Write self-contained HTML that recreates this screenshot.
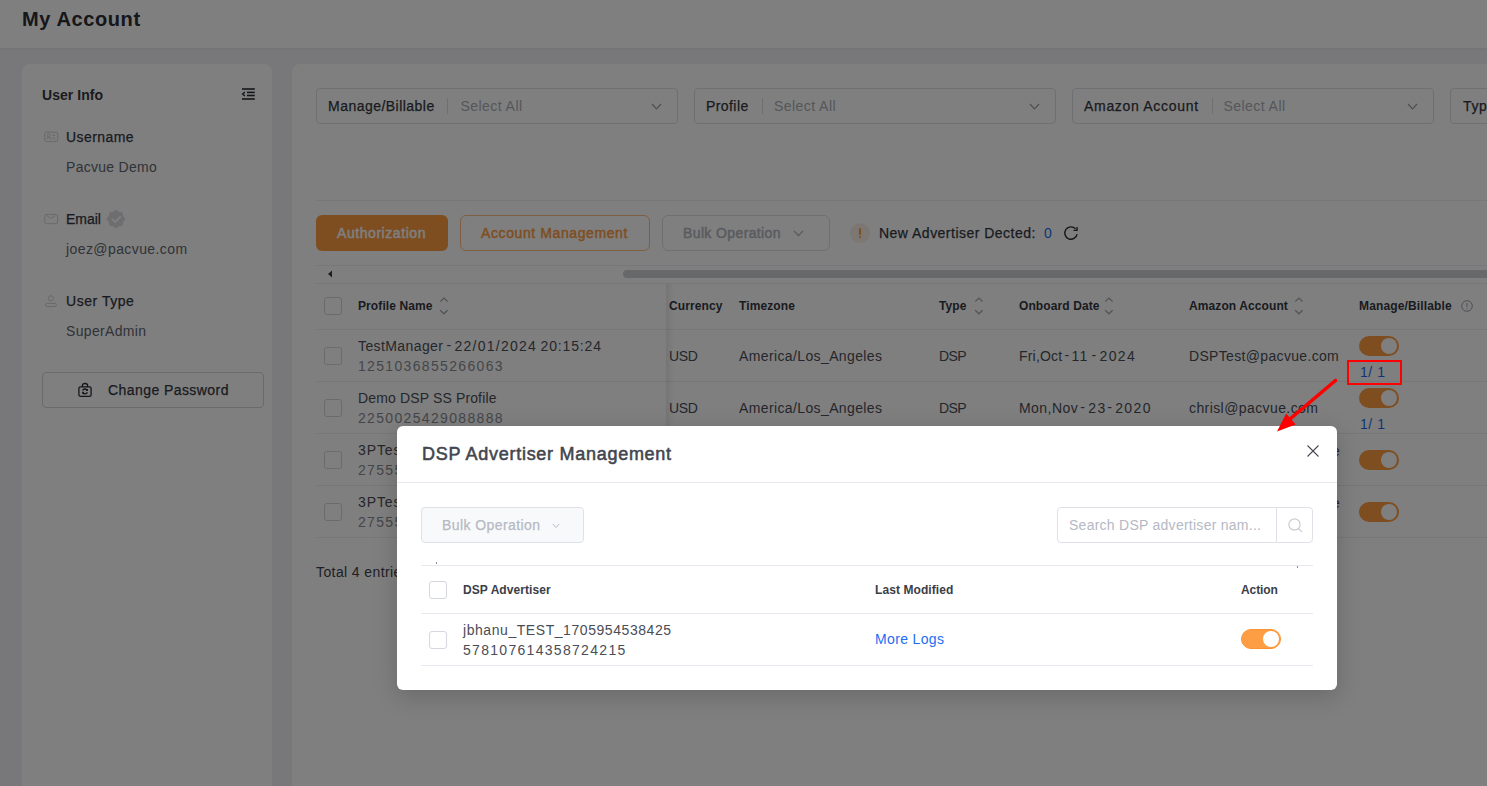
<!DOCTYPE html>
<html><head><meta charset="utf-8"><style>
html,body{margin:0;padding:0;}
body{width:1487px;height:786px;overflow:hidden;position:relative;background:#f1f1f4;font-family:"Liberation Sans",sans-serif;}
.a{position:absolute;}
.t{position:absolute;white-space:nowrap;}
</style></head><body>
<div class="a" style="left:0px;top:0px;width:1487px;height:48px;background:#fff;box-shadow:0 1px 3px rgba(0,0,0,0.06)"></div>
<div class="t" style="left:22px;top:5.07px;font-size:20px;line-height:28px;color:#2b2e37;font-weight:bold;letter-spacing:0.61px;">My Account</div>
<div class="a" style="left:22px;top:64px;width:250px;height:800px;background:#fff;border-radius:8px"></div>
<div class="t" style="left:42px;top:85.15px;font-size:14px;line-height:20px;color:#343741;font-weight:bold;letter-spacing:0.05px;">User Info</div>
<svg class="a" style="left:240px;top:87px" width="16" height="14" viewBox="0 0 16 14"><g stroke="#2a2c33" stroke-width="1.6" fill="none"><line x1="2" y1="2" x2="14.8" y2="2"/><line x1="7" y1="5.4" x2="14.8" y2="5.4"/><line x1="7" y1="8.5" x2="14.8" y2="8.5"/><line x1="2" y1="12" x2="14.8" y2="12"/><polyline points="4.9,4.9 2.6,7 4.9,9.1" stroke-width="1.4"/></g></svg>
<svg class="a" style="left:44px;top:131px" width="15" height="12" viewBox="0 0 15 12"><g stroke="#d2d3d8" stroke-width="1" fill="none"><rect x="0.7" y="1.2" width="13" height="9.4" rx="1.5"/><circle cx="4.6" cy="4.6" r="1.5"/><path d="M2.3 8.6 Q2.8 6.4 4.6 6.4 Q6.4 6.4 6.9 8.6"/><line x1="8.3" y1="4.4" x2="11.3" y2="4.4"/><line x1="8.3" y1="7.2" x2="11.3" y2="7.2"/></g></svg>
<div class="t" style="left:66px;top:127.15px;font-size:14px;line-height:20px;color:#343741;font-weight:normal;letter-spacing:0.44px;-webkit-text-stroke:0.25px currentColor">Username</div>
<div class="t" style="left:66px;top:157.15px;font-size:14px;line-height:20px;color:#62666f;font-weight:normal;letter-spacing:0.29px;">Pacvue Demo</div>
<svg class="a" style="left:44px;top:213px" width="15" height="12" viewBox="0 0 15 12"><g stroke="#d2d3d8" stroke-width="1" fill="none"><rect x="0.8" y="1.4" width="12.8" height="9.3" rx="1.6"/><polyline points="2.7,2.6 6.9,5.5 11.1,2.6"/></g></svg>
<div class="t" style="left:66px;top:208.95px;font-size:14px;line-height:20px;color:#343741;font-weight:normal;letter-spacing:-0.05px;-webkit-text-stroke:0.25px currentColor">Email</div>
<svg class="a" style="left:106px;top:209px" width="20" height="20" viewBox="0 0 20 20"><g fill="#dcdde1"><rect x="2.9" y="2.9" width="14.2" height="14.2" rx="2.2"/><rect x="2.9" y="2.9" width="14.2" height="14.2" rx="2.2" transform="rotate(45 10 10)"/></g><polyline points="6.3,10.4 9.2,13.2 14.3,7.9" stroke="#fff" stroke-width="1.8" fill="none" stroke-linecap="round" stroke-linejoin="round"/></svg>
<div class="t" style="left:66px;top:239.15px;font-size:14px;line-height:20px;color:#62666f;font-weight:normal;letter-spacing:0.41px;">joez@pacvue.com</div>
<svg class="a" style="left:44px;top:294px" width="15" height="14" viewBox="0 0 15 14"><g stroke="#d2d3d8" stroke-width="1" fill="none"><circle cx="6.9" cy="4.3" r="2.6"/><rect x="1.6" y="9.4" width="10.8" height="3.1" rx="1.55"/></g></svg>
<div class="t" style="left:66px;top:290.95px;font-size:14px;line-height:20px;color:#343741;font-weight:normal;letter-spacing:0.54px;-webkit-text-stroke:0.25px currentColor">User Type</div>
<div class="t" style="left:66px;top:321.15px;font-size:14px;line-height:20px;color:#62666f;font-weight:normal;letter-spacing:0.33px;">SuperAdmin</div>
<div class="a" style="left:42px;top:372px;width:222px;height:36px;box-sizing:border-box;border:1px solid #d4d7de;border-radius:4px;background:#fff"></div>
<svg class="a" style="left:77px;top:382px" width="16" height="16" viewBox="0 0 16 16"><g stroke="#2a2c33" stroke-width="1.3" fill="none"><rect x="1.9" y="4.9" width="12.2" height="9.4" rx="1.6"/><path d="M5.4 4.9 V3.6 Q5.4 1.5 8 1.5 Q10.6 1.5 10.6 3.6 V4.9"/><path d="M5.6 8.6 A2.6 2.6 0 0 1 10.2 8.2"/><path d="M10.4 10.2 A2.6 2.6 0 0 1 5.8 10.6"/><polyline points="10.4,7 10.3,8.4 8.9,8.4" stroke-width="1.1"/><polyline points="5.6,11.8 5.7,10.4 7.1,10.4" stroke-width="1.1"/></g></svg>
<div class="t" style="left:108px;top:380.15px;font-size:14px;line-height:20px;color:#343741;font-weight:normal;letter-spacing:0.43px;-webkit-text-stroke:0.25px currentColor">Change Password</div>
<div class="a" style="left:292px;top:64px;width:1300px;height:800px;background:#fff;border-radius:8px"></div>
<div class="a" style="left:316px;top:88px;width:362px;height:36px;box-sizing:border-box;border:1px solid #dcdfe6;border-radius:4px;background:#fff"></div>
<div class="t" style="left:328px;top:96.15px;font-size:14px;line-height:20px;color:#343741;font-weight:normal;letter-spacing:0.47px;-webkit-text-stroke:0.25px currentColor">Manage/Billable</div>
<div class="a" style="left:447px;top:98px;width:1px;height:16px;background:#dcdfe6"></div>
<div class="t" style="left:460.5px;top:96.15px;font-size:14px;line-height:20px;color:#a9adb6;font-weight:normal;letter-spacing:0.44px;">Select All</div>
<svg class="a" style="left:650.5px;top:103px" width="11" height="7" viewBox="0 0 11 7"><polyline points="1,1 5.5,5.8 10,1" stroke="#9a9da6" stroke-width="1.2" fill="none"/></svg>
<div class="a" style="left:694px;top:88px;width:362px;height:36px;box-sizing:border-box;border:1px solid #dcdfe6;border-radius:4px;background:#fff"></div>
<div class="t" style="left:706px;top:96.15px;font-size:14px;line-height:20px;color:#343741;font-weight:normal;letter-spacing:0.42px;-webkit-text-stroke:0.25px currentColor">Profile</div>
<div class="a" style="left:761.5px;top:98px;width:1px;height:16px;background:#dcdfe6"></div>
<div class="t" style="left:774px;top:96.15px;font-size:14px;line-height:20px;color:#a9adb6;font-weight:normal;letter-spacing:0.44px;">Select All</div>
<svg class="a" style="left:1028.5px;top:103px" width="11" height="7" viewBox="0 0 11 7"><polyline points="1,1 5.5,5.8 10,1" stroke="#9a9da6" stroke-width="1.2" fill="none"/></svg>
<div class="a" style="left:1072px;top:88px;width:362px;height:36px;box-sizing:border-box;border:1px solid #dcdfe6;border-radius:4px;background:#fff"></div>
<div class="t" style="left:1084px;top:96.15px;font-size:14px;line-height:20px;color:#343741;font-weight:normal;letter-spacing:0.69px;-webkit-text-stroke:0.25px currentColor">Amazon Account</div>
<div class="a" style="left:1212px;top:98px;width:1px;height:16px;background:#dcdfe6"></div>
<div class="t" style="left:1223.5px;top:96.15px;font-size:14px;line-height:20px;color:#a9adb6;font-weight:normal;letter-spacing:0.44px;">Select All</div>
<svg class="a" style="left:1406.5px;top:103px" width="11" height="7" viewBox="0 0 11 7"><polyline points="1,1 5.5,5.8 10,1" stroke="#9a9da6" stroke-width="1.2" fill="none"/></svg>
<div class="a" style="left:1450px;top:88px;width:362px;height:36px;box-sizing:border-box;border:1px solid #dcdfe6;border-radius:4px;background:#fff"></div>
<div class="t" style="left:1463px;top:96.15px;font-size:14px;line-height:20px;color:#343741;font-weight:normal;letter-spacing:0.6px;-webkit-text-stroke:0.25px currentColor">Type</div>
<div class="a" style="left:316px;top:200px;width:1200px;height:1px;background:#eeeff2"></div>
<div class="a" style="left:316px;top:215px;width:132px;height:36px;background:#fd9c42;border-radius:6px"></div>
<div class="t" style="left:337px;top:223.15px;font-size:14px;line-height:20px;color:#fff;font-weight:normal;letter-spacing:0.56px;-webkit-text-stroke:0.45px #fff">Authorization</div>
<div class="a" style="left:460px;top:215px;width:190px;height:36px;box-sizing:border-box;border:1px solid #fcbf85;border-radius:6px;background:#fff"></div>
<div class="t" style="left:481px;top:223.15px;font-size:14px;line-height:20px;color:#fd9c42;font-weight:normal;letter-spacing:0.6px;-webkit-text-stroke:0.45px #fd9c42">Account Management</div>
<div class="a" style="left:662px;top:215px;width:168px;height:36px;box-sizing:border-box;border:1px solid #dcdfe6;border-radius:6px;background:#fff"></div>
<div class="t" style="left:683px;top:223.15px;font-size:14px;line-height:20px;color:#b3b6bd;font-weight:normal;letter-spacing:0.38px;-webkit-text-stroke:0.45px #b3b6bd">Bulk Operation</div>
<svg class="a" style="left:792.5px;top:230px" width="11" height="7" viewBox="0 0 11 7"><polyline points="1,1 5.5,5.5 10,1" stroke="#b3b6bd" stroke-width="1.3" fill="none"/></svg>
<div class="a" style="left:850px;top:223px;width:20px;height:20px;background:#f9efe6;border-radius:50%"></div>
<div class="a" style="left:859px;top:228.3px;width:1.8px;height:6.6px;background:#fd9c42;border-radius:1px"></div>
<div class="a" style="left:859px;top:236.3px;width:1.8px;height:1.8px;background:#fd9c42;border-radius:1px"></div>
<div class="t" style="left:879px;top:223.15px;font-size:14px;line-height:20px;color:#343741;font-weight:normal;letter-spacing:0.48px;-webkit-text-stroke:0.25px currentColor">New Advertiser Dected:</div>
<div class="t" style="left:1044px;top:223.15px;font-size:14px;line-height:20px;color:#1b6cf2;font-weight:normal;letter-spacing:0px;">0</div>
<svg class="a" style="left:1063px;top:225px" width="16" height="16" viewBox="0 0 16 16"><path d="M14.1 9.1 A6.2 6.2 0 1 1 12.6 3.9" stroke="#2a2c33" stroke-width="1.4" fill="none"/><polyline points="14,1.9 14,5.4 10.5,5.4" stroke="#2a2c33" stroke-width="1.4" fill="none"/></svg>
<div class="a" style="left:316px;top:265px;width:1200px;height:1px;background:#eeeff2"></div>
<svg class="a" style="left:327px;top:270px" width="6" height="8" viewBox="0 0 6 8"><polygon points="5,0.5 5,7.5 1,4" fill="#3a3d45"/></svg>
<div class="a" style="left:623px;top:270px;width:900px;height:8px;background:#cfd0d4;border-radius:4px"></div>
<div class="a" style="left:316px;top:283px;width:1200px;height:1px;background:#eeeff2"></div>
<div class="a" style="left:316px;top:329px;width:1200px;height:1px;background:#eeeff2"></div>
<div class="a" style="left:316px;top:381px;width:1200px;height:1px;background:#eeeff2"></div>
<div class="a" style="left:316px;top:433px;width:1200px;height:1px;background:#eeeff2"></div>
<div class="a" style="left:316px;top:485px;width:1200px;height:1px;background:#eeeff2"></div>
<div class="a" style="left:316px;top:537px;width:1200px;height:1px;background:#eeeff2"></div>
<div class="a" style="left:324px;top:297px;width:18px;height:18px;box-sizing:border-box;border:1px solid #d4d7de;border-radius:3px;background:#fff"></div>
<div class="t" style="left:358px;top:298.14px;font-size:12px;line-height:17px;color:#343741;font-weight:bold;letter-spacing:0.1px;">Profile Name</div>
<svg class="a" style="left:438.5px;top:297px" width="9" height="18" viewBox="0 0 9 18"><g stroke="#a3a6ae" stroke-width="1.25" fill="none"><polyline points="1.2,4.6 4.9,1 8.6,4.6"/><polyline points="1.2,13.2 4.9,16.8 8.6,13.2"/></g></svg>
<div class="t" style="left:669px;top:298.14px;font-size:12px;line-height:17px;color:#343741;font-weight:bold;letter-spacing:0.1px;">Currency</div>
<div class="t" style="left:739px;top:298.14px;font-size:12px;line-height:17px;color:#343741;font-weight:bold;letter-spacing:0.1px;">Timezone</div>
<div class="t" style="left:939px;top:298.14px;font-size:12px;line-height:17px;color:#343741;font-weight:bold;letter-spacing:0.1px;">Type</div>
<svg class="a" style="left:973.5px;top:297px" width="9" height="18" viewBox="0 0 9 18"><g stroke="#a3a6ae" stroke-width="1.25" fill="none"><polyline points="1.2,4.6 4.9,1 8.6,4.6"/><polyline points="1.2,13.2 4.9,16.8 8.6,13.2"/></g></svg>
<div class="t" style="left:1019px;top:298.14px;font-size:12px;line-height:17px;color:#343741;font-weight:bold;letter-spacing:0.1px;">Onboard Date</div>
<svg class="a" style="left:1104px;top:297px" width="9" height="18" viewBox="0 0 9 18"><g stroke="#a3a6ae" stroke-width="1.25" fill="none"><polyline points="1.2,4.6 4.9,1 8.6,4.6"/><polyline points="1.2,13.2 4.9,16.8 8.6,13.2"/></g></svg>
<div class="t" style="left:1189px;top:298.14px;font-size:12px;line-height:17px;color:#343741;font-weight:bold;letter-spacing:0.1px;">Amazon Account</div>
<svg class="a" style="left:1294px;top:297px" width="9" height="18" viewBox="0 0 9 18"><g stroke="#a3a6ae" stroke-width="1.25" fill="none"><polyline points="1.2,4.6 4.9,1 8.6,4.6"/><polyline points="1.2,13.2 4.9,16.8 8.6,13.2"/></g></svg>
<div class="t" style="left:1359px;top:298.14px;font-size:12px;line-height:17px;color:#343741;font-weight:bold;letter-spacing:0.14px;">Manage/Billable</div>
<svg class="a" style="left:1461px;top:300px" width="12" height="12" viewBox="0 0 12 12"><circle cx="6" cy="6" r="5.3" stroke="#9a9ea8" stroke-width="1" fill="none"/><line x1="6" y1="3" x2="6" y2="7" stroke="#9a9ea8" stroke-width="1"/><circle cx="6" cy="8.8" r="0.6" fill="#9a9ea8"/></svg>
<div class="a" style="left:666px;top:284px;width:8px;height:254px;background:linear-gradient(to right, rgba(0,0,0,0.08), rgba(0,0,0,0))"></div>
<div class="a" style="left:324px;top:347px;width:18px;height:18px;box-sizing:border-box;border:1px solid #d4d7de;border-radius:3px;background:#fff"></div>
<div class="t" style="left:358px;top:336.45px;font-size:14px;line-height:20px;color:#4b4e57;font-weight:normal;letter-spacing:0.4px;">TestManager</div>
<div class="t" style="left:446.5px;top:335.45px;font-size:14px;line-height:20px;color:#4b4e57;font-weight:normal;letter-spacing:0px;">-</div>
<div class="t" style="left:454.5px;top:336.45px;font-size:14px;line-height:20px;color:#4b4e57;font-weight:normal;letter-spacing:1.25px;">22/01/2024</div>
<div class="t" style="left:540.5px;top:336.45px;font-size:14px;line-height:20px;color:#4b4e57;font-weight:normal;letter-spacing:0.85px;">20:15:24</div>
<div class="t" style="left:358px;top:355.85px;font-size:14px;line-height:20px;color:#8a8d95;font-weight:normal;letter-spacing:1.33px;">1251036855266063</div>
<div class="t" style="left:669px;top:346.45px;font-size:14px;line-height:20px;color:#4b4e57;font-weight:normal;letter-spacing:-0.3px;">USD</div>
<div class="t" style="left:739px;top:346.45px;font-size:14px;line-height:20px;color:#4b4e57;font-weight:normal;letter-spacing:0.38px;">America/Los_Angeles</div>
<div class="t" style="left:939px;top:346.45px;font-size:14px;line-height:20px;color:#4b4e57;font-weight:normal;letter-spacing:-0.6px;">DSP</div>
<div class="t" style="left:1019px;top:346.45px;font-size:14px;line-height:20px;color:#4b4e57;font-weight:normal;letter-spacing:0.2px;">Fri,Oct</div>
<div class="t" style="left:1064.5px;top:345.15px;font-size:14px;line-height:20px;color:#4b4e57;font-weight:normal;letter-spacing:0px;">-</div>
<div class="t" style="left:1071.5px;top:346.45px;font-size:14px;line-height:20px;color:#4b4e57;font-weight:normal;letter-spacing:1.3px;">11</div>
<div class="t" style="left:1091.5px;top:345.15px;font-size:14px;line-height:20px;color:#4b4e57;font-weight:normal;letter-spacing:0px;">-</div>
<div class="t" style="left:1099.5px;top:346.45px;font-size:14px;line-height:20px;color:#4b4e57;font-weight:normal;letter-spacing:1.4px;">2024</div>
<div class="t" style="left:1189px;top:346.45px;font-size:14px;line-height:20px;color:#4b4e57;font-weight:normal;letter-spacing:0.33px;">DSPTest@pacvue.com</div>
<div class="a" style="left:1359px;top:336px;width:40px;height:20px;background:#fd9c42;border-radius:10px"></div>
<div class="a" style="left:1381px;top:338px;width:16px;height:16px;background:#fff;border-radius:50%"></div>
<div class="t" style="left:1360px;top:362.45px;font-size:14px;line-height:20px;color:#1b6cf2;font-weight:normal;letter-spacing:0.58px;">1/ 1</div>
<div class="a" style="left:324px;top:399px;width:18px;height:18px;box-sizing:border-box;border:1px solid #d4d7de;border-radius:3px;background:#fff"></div>
<div class="t" style="left:358px;top:388.45px;font-size:14px;line-height:20px;color:#4b4e57;font-weight:normal;letter-spacing:0.14px;">Demo DSP SS Profile</div>
<div class="t" style="left:358px;top:407.85px;font-size:14px;line-height:20px;color:#8a8d95;font-weight:normal;letter-spacing:1.33px;">2250025429088888</div>
<div class="t" style="left:669px;top:398.45px;font-size:14px;line-height:20px;color:#4b4e57;font-weight:normal;letter-spacing:-0.3px;">USD</div>
<div class="t" style="left:739px;top:398.45px;font-size:14px;line-height:20px;color:#4b4e57;font-weight:normal;letter-spacing:0.38px;">America/Los_Angeles</div>
<div class="t" style="left:939px;top:398.45px;font-size:14px;line-height:20px;color:#4b4e57;font-weight:normal;letter-spacing:-0.6px;">DSP</div>
<div class="t" style="left:1019px;top:398.45px;font-size:14px;line-height:20px;color:#4b4e57;font-weight:normal;letter-spacing:0.45px;">Mon,Nov</div>
<div class="t" style="left:1080.3px;top:397.15px;font-size:14px;line-height:20px;color:#4b4e57;font-weight:normal;letter-spacing:0px;">-</div>
<div class="t" style="left:1088.3px;top:398.45px;font-size:14px;line-height:20px;color:#4b4e57;font-weight:normal;letter-spacing:1.3px;">23</div>
<div class="t" style="left:1107.3px;top:397.15px;font-size:14px;line-height:20px;color:#4b4e57;font-weight:normal;letter-spacing:0px;">-</div>
<div class="t" style="left:1115.2px;top:398.45px;font-size:14px;line-height:20px;color:#4b4e57;font-weight:normal;letter-spacing:1.4px;">2020</div>
<div class="t" style="left:1189px;top:398.45px;font-size:14px;line-height:20px;color:#4b4e57;font-weight:normal;letter-spacing:0.41px;">chrisl@pacvue.com</div>
<div class="a" style="left:1359px;top:388px;width:40px;height:20px;background:#fd9c42;border-radius:10px"></div>
<div class="a" style="left:1381px;top:390px;width:16px;height:16px;background:#fff;border-radius:50%"></div>
<div class="t" style="left:1360px;top:414.45px;font-size:14px;line-height:20px;color:#1b6cf2;font-weight:normal;letter-spacing:0.58px;">1/ 1</div>
<div class="a" style="left:324px;top:451px;width:18px;height:18px;box-sizing:border-box;border:1px solid #d4d7de;border-radius:3px;background:#fff"></div>
<div class="t" style="left:358px;top:440.45px;font-size:14px;line-height:20px;color:#4b4e57;font-weight:normal;letter-spacing:0.9px;">3PTest Profile</div>
<div class="t" style="left:358px;top:459.85px;font-size:14px;line-height:20px;color:#8a8d95;font-weight:normal;letter-spacing:1.33px;">2755512345678901</div>
<div class="t" style="left:1332px;top:440.65px;font-size:14px;line-height:20px;color:#4b4e57;font-weight:normal;letter-spacing:0px;">e</div>
<div class="a" style="left:1359px;top:450px;width:40px;height:20px;background:#fd9c42;border-radius:10px"></div>
<div class="a" style="left:1381px;top:452px;width:16px;height:16px;background:#fff;border-radius:50%"></div>
<div class="a" style="left:324px;top:503px;width:18px;height:18px;box-sizing:border-box;border:1px solid #d4d7de;border-radius:3px;background:#fff"></div>
<div class="t" style="left:358px;top:492.45px;font-size:14px;line-height:20px;color:#4b4e57;font-weight:normal;letter-spacing:0.9px;">3PTest Profile 2</div>
<div class="t" style="left:358px;top:511.85px;font-size:14px;line-height:20px;color:#8a8d95;font-weight:normal;letter-spacing:1.33px;">2755598765432101</div>
<div class="t" style="left:1332px;top:492.65px;font-size:14px;line-height:20px;color:#4b4e57;font-weight:normal;letter-spacing:0px;">e</div>
<div class="a" style="left:1359px;top:502px;width:40px;height:20px;background:#fd9c42;border-radius:10px"></div>
<div class="a" style="left:1381px;top:504px;width:16px;height:16px;background:#fff;border-radius:50%"></div>
<div class="t" style="left:316px;top:562.15px;font-size:14px;line-height:20px;color:#3e414a;font-weight:normal;letter-spacing:0.4px;">Total 4 entries</div>
<div class="a" style="left:0px;top:0px;width:1487px;height:786px;background:rgba(0,0,0,0.5)"></div>
<div class="a" style="left:397px;top:426px;width:940px;height:264px;background:#fff;border-radius:6px;box-shadow:0 6px 24px rgba(0,0,0,0.18)">
<div class="t" style="left:25px;top:16.26px;font-size:18px;line-height:25px;color:#43464f;font-weight:normal;letter-spacing:0.72px;-webkit-text-stroke:0.55px #43464f">DSP Advertiser Management</div>
<svg class="a" style="left:910px;top:19px" width="12" height="12" viewBox="0 0 12 12"><g stroke="#474a52" stroke-width="1.1"><line x1="0.5" y1="0.5" x2="11.5" y2="11.5"/><line x1="11.5" y1="0.5" x2="0.5" y2="11.5"/></g></svg>
<div class="a" style="left:0px;top:56px;width:940px;height:1px;background:#e7e9f0"></div>
<div class="a" style="left:24px;top:81px;width:163px;height:36px;box-sizing:border-box;border:1px solid #dfe1e7;border-radius:4px;background:#f8f9fa"></div>
<div class="t" style="left:45px;top:89.45px;font-size:14px;line-height:20px;color:#b5b9c4;font-weight:normal;letter-spacing:0.42px;-webkit-text-stroke:0.25px currentColor">Bulk Operation</div>
<svg class="a" style="left:154.5px;top:97px" width="8" height="6" viewBox="0 0 8 6"><polyline points="0.8,1 4,4.5 7.2,1" stroke="#b5b9c4" stroke-width="1" fill="none"/></svg>
<div class="a" style="left:660px;top:81px;width:256px;height:36px;box-sizing:border-box;border:1px solid #dfe1e7;border-radius:4px;background:#fff"></div>
<div class="a" style="left:879px;top:82px;width:1px;height:34px;background:#dfe1e7"></div>
<div class="t" style="left:672px;top:89.35px;font-size:14px;line-height:20px;color:#b5b9c4;font-weight:normal;letter-spacing:0.26px;">Search DSP advertiser nam...</div>
<svg class="a" style="left:891px;top:92px" width="15" height="15" viewBox="0 0 15 15"><g stroke="#c9ccd4" stroke-width="1.2" fill="none"><circle cx="6.5" cy="6.5" r="5.6"/><line x1="10.5" y1="10.5" x2="13.8" y2="13.8"/></g></svg>
<div class="a" style="left:24px;top:139px;width:892px;height:1px;background:#e7e9f0"></div>
<div class="a" style="left:39px;top:136px;width:1px;height:2px;background:#8a8d94"></div>
<div class="a" style="left:900px;top:140px;width:1px;height:2px;background:#8a8d94"></div>
<div class="a" style="left:24px;top:187px;width:892px;height:1px;background:#e7e9f0"></div>
<div class="a" style="left:24px;top:239px;width:892px;height:1px;background:#e7e9f0"></div>
<div class="a" style="left:32px;top:155px;width:18px;height:18px;box-sizing:border-box;border:1px solid #d4d7de;border-radius:3px;background:#fff"></div>
<div class="t" style="left:66px;top:155.94px;font-size:12px;line-height:17px;color:#3b3e47;font-weight:bold;letter-spacing:0.07px;">DSP Advertiser</div>
<div class="t" style="left:478px;top:156.14px;font-size:12px;line-height:17px;color:#3b3e47;font-weight:bold;letter-spacing:0.08px;">Last Modified</div>
<div class="t" style="left:844px;top:156.14px;font-size:12px;line-height:17px;color:#3b3e47;font-weight:bold;letter-spacing:-0.1px;">Action</div>
<div class="a" style="left:32px;top:205px;width:18px;height:18px;box-sizing:border-box;border:1px solid #d4d7de;border-radius:3px;background:#fff"></div>
<div class="t" style="left:66px;top:194.25px;font-size:14px;line-height:20px;color:#4a4d56;font-weight:normal;letter-spacing:0.56px;">jbhanu_TEST_1705954538425</div>
<div class="t" style="left:66px;top:213.75px;font-size:14px;line-height:20px;color:#4a4d56;font-weight:normal;letter-spacing:1.3px;">578107614358724215</div>
<div class="t" style="left:478px;top:202.95px;font-size:14px;line-height:20px;color:#1b6ef3;font-weight:normal;letter-spacing:0.35px;">More Logs</div>
<div class="a" style="left:844px;top:203px;width:40px;height:20px;box-sizing:border-box;border:1px solid #fd9330;background:#fe9e44;border-radius:10px"></div>
<div class="a" style="left:866px;top:205px;width:16px;height:16px;background:#fff;border-radius:50%"></div>
</div>
<div class="a" style="left:1347px;top:360px;width:55px;height:25px;box-sizing:border-box;border:2px solid #ff0000"></div>
<svg class="a" style="left:0;top:0" width="1487" height="786"><line x1="1335.5" y1="380.5" x2="1290" y2="419" stroke="#ff0000" stroke-width="3.6" stroke-linecap="round"/><polygon points="1277,431.5 1286.2,413.6 1295.7,424.5" fill="#ff0000"/></svg>
</body></html>
